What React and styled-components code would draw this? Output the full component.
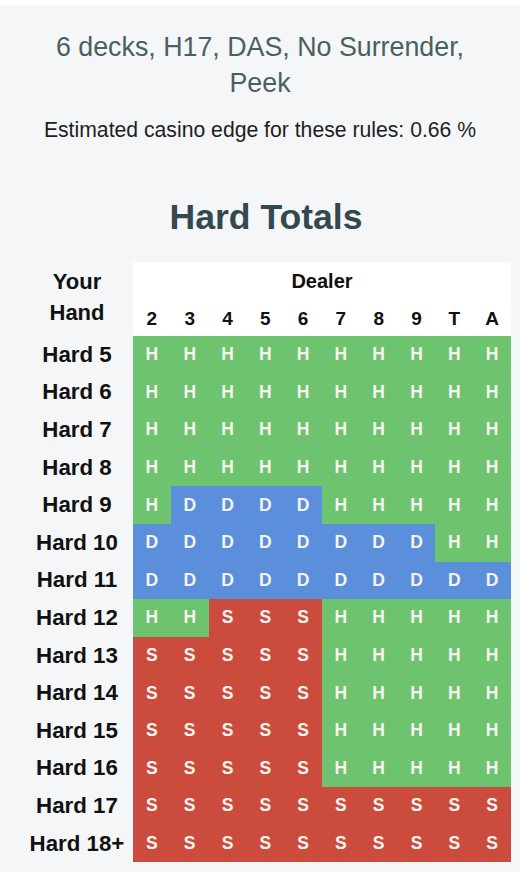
import React from "react";
import styled, { createGlobalStyle } from "styled-components";

const Global = createGlobalStyle`
  html, body { margin: 0; padding: 0; background: #ffffff; }
  body { font-family: "Liberation Sans", Arial, sans-serif; }
`;

const Panel = styled.div`
  width: 520px;
  margin-top: 5px;
  min-height: 867px;
  box-sizing: border-box;
  background: #f4f6f8;
  padding: 24px 0 0 0;
  display: flex;
  flex-direction: column;
  align-items: center;
`;

const Rules = styled.div`
  width: 440px;
  text-align: center;
  font-size: 26.8px;
  line-height: 36px;
  color: #4a5f60;
`;

const Edge = styled.div`
  margin-top: 16px;
  font-size: 21.2px;
  line-height: 26px;
  color: #1e1e1e;
  text-align: center;
`;

const Title = styled.h2`
  margin: 53px 0 0 12px;
  font-size: 35.6px;
  line-height: 42px;
  font-weight: 700;
  color: #33494f;
`;

const Table = styled.div`
  align-self: flex-start;
  margin: 24px 0 0 21px;
  display: grid;
  grid-template-columns: 112px repeat(10, 37.8px);
  grid-template-rows: 37px 37px repeat(14, 37.6px);
`;

const Corner = styled.div`
  grid-row: 1 / span 2;
  grid-column: 1;
  display: flex;
  flex-direction: column;
  align-items: center;
  justify-content: center;
  font-size: 22px;
  font-weight: 700;
  line-height: 31px;
  color: #111;
  padding-bottom: 5px;
`;

const DealerHead = styled.div`
  grid-row: 1;
  grid-column: 2 / span 10;
  background: #ffffff;
  display: flex;
  align-items: center;
  justify-content: center;
  font-size: 20px;
  font-weight: 700;
  color: #111;
  padding-top: 2px;
`;

const ColHead = styled.div`
  grid-row: 2;
  background: #ffffff;
  display: flex;
  align-items: center;
  justify-content: center;
  font-size: 19px;
  font-weight: 700;
  color: #111;
  padding-top: 2px;
`;

const RowLabel = styled.div`
  display: flex;
  align-items: center;
  justify-content: center;
  font-size: 22.3px;
  font-weight: 700;
  color: #111;
  white-space: nowrap;
`;

const colors = { H: "#6dc36e", D: "#5b8fdb", S: "#cb4b3c" };

const Cell = styled.div`
  background: ${(p) => colors[p.$a]};
  display: flex;
  align-items: center;
  justify-content: center;
  font-size: 17.5px;
  font-weight: 700;
  color: #f6f4ee;
`;

const dealer = ["2", "3", "4", "5", "6", "7", "8", "9", "T", "A"];

const rows = [
  ["Hard 5", "HHHHHHHHHH"],
  ["Hard 6", "HHHHHHHHHH"],
  ["Hard 7", "HHHHHHHHHH"],
  ["Hard 8", "HHHHHHHHHH"],
  ["Hard 9", "HDDDDHHHHH"],
  ["Hard 10", "DDDDDDDDHH"],
  ["Hard 11", "DDDDDDDDDD"],
  ["Hard 12", "HHSSSHHHHH"],
  ["Hard 13", "SSSSSHHHHH"],
  ["Hard 14", "SSSSSHHHHH"],
  ["Hard 15", "SSSSSHHHHH"],
  ["Hard 16", "SSSSSHHHHH"],
  ["Hard 17", "SSSSSSSSSS"],
  ["Hard 18+", "SSSSSSSSSS"],
];

export default function App() {
  return (
    <>
      <Global />
      <Panel>
        <Rules>6 decks, H17, DAS, No Surrender, Peek</Rules>
        <Edge>Estimated casino edge for these rules: 0.66 %</Edge>
        <Title>Hard Totals</Title>
        <Table>
          <Corner>
            <span>Your</span>
            <span>Hand</span>
          </Corner>
          <DealerHead>Dealer</DealerHead>
          {dealer.map((d) => (
            <ColHead key={d}>{d}</ColHead>
          ))}
          {rows.map(([label, acts]) => (
            <React.Fragment key={label}>
              <RowLabel>{label}</RowLabel>
              {acts.split("").map((a, i) => (
                <Cell key={i} $a={a}>
                  {a}
                </Cell>
              ))}
            </React.Fragment>
          ))}
        </Table>
      </Panel>
    </>
  );
}
